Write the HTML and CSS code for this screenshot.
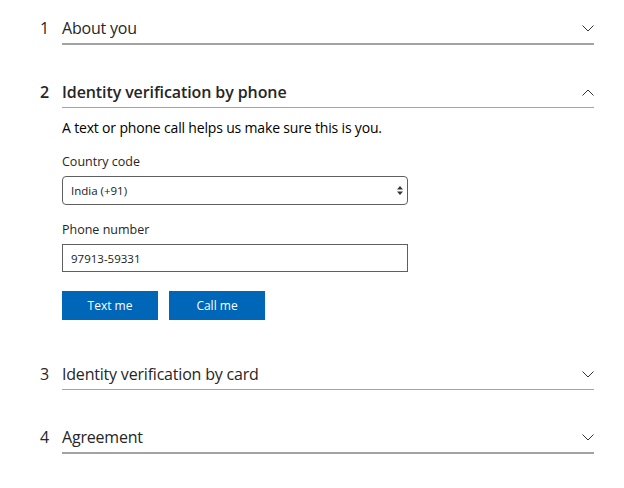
FILE: index.html
```html
<!DOCTYPE html>
<html lang="en">
<head>
<meta charset="utf-8">
<title>Verification</title>
<link rel="stylesheet" href="styles.css">
</head>
<body>
<div class="steps">
  <section class="step">
    <div class="step-header">
      <span class="num">1</span>
      <div class="head thick">
        <span class="title">About you</span>
        <svg class="chev" width="12" height="7" viewBox="0 0 12 7"><path d="M0.5 0.5 L6 6 L11.5 0.5" fill="none" stroke="#333" stroke-width="1"/></svg>
      </div>
    </div>
  </section>

  <section class="step open">
    <div class="step-header">
      <span class="num bold">2</span>
      <div class="head">
        <span class="title bold">Identity verification by phone</span>
        <svg class="chev" width="12" height="7" viewBox="0 0 12 7"><path d="M0.5 6.5 L6 1 L11.5 6.5" fill="none" stroke="#333" stroke-width="1"/></svg>
      </div>
    </div>
    <div class="step-body">
      <p class="intro">A text or phone call helps us make sure this is you.</p>
      <label class="label">Country code</label>
      <div class="select">
        <span>India (+91)</span>
        <svg class="updown" width="6" height="9" viewBox="0 0 6 9"><path d="M3 0 L6 3.5 L0 3.5 Z M0 5.5 L6 5.5 L3 9 Z" fill="#333"/></svg>
      </div>
      <label class="label">Phone number</label>
      <div class="input">97913-59331</div>
      <div class="buttons">
        <button class="btn">Text me</button>
        <button class="btn">Call me</button>
      </div>
    </div>
  </section>

  <section class="step">
    <div class="step-header">
      <span class="num">3</span>
      <div class="head">
        <span class="title">Identity verification by card</span>
        <svg class="chev" width="12" height="7" viewBox="0 0 12 7"><path d="M0.5 0.5 L6 6 L11.5 0.5" fill="none" stroke="#333" stroke-width="1"/></svg>
      </div>
    </div>
  </section>

  <section class="step">
    <div class="step-header">
      <span class="num">4</span>
      <div class="head thick">
        <span class="title">Agreement</span>
        <svg class="chev" width="12" height="7" viewBox="0 0 12 7"><path d="M0.5 0.5 L6 6 L11.5 0.5" fill="none" stroke="#333" stroke-width="1"/></svg>
      </div>
    </div>
  </section>
</div>
</body>
</html>
```

FILE: styles.css
```css
html, body {
  margin: 0;
  padding: 0;
  background: #fff;
}
body {
  font-family: "Open Sans", "Noto Sans", sans-serif;
  color: #262626;
}
.steps {
  display: flex;
  flex-direction: column;
  gap: 38px;
  padding: 19px 30px 0 40px;
  width: 554px;
}
.step-header {
  display: flex;
  align-items: flex-start;
}
.num {
  width: 22px;
  font-size: 16px;
  line-height: 18px;
}
.head {
  flex: 1;
  display: flex;
  justify-content: space-between;
  align-items: center;
  height: 18px;
  padding-bottom: 6px;
  border-bottom: 1px solid #a3a3a3;
}
.head.thick {
  border-bottom-width: 2px;
}
.title {
  font-size: 16px;
  line-height: 18px;
  letter-spacing: -0.2px;
}
.bold {
  font-weight: 600;
  letter-spacing: -0.1px;
}
.chev {
  display: block;
  margin-top: 1px;
}
.step-body {
  padding: 10px 0 7px 22px;
}
.intro {
  margin: 0 0 15px;
  font-size: 14px;
  line-height: 20px;
  letter-spacing: -0.17px;
  color: #000;
}
.label {
  display: block;
  font-size: 12.5px;
  line-height: 18px;
  margin-bottom: 5px;
  color: #262626;
}
.select {
  box-sizing: border-box;
  width: 346px;
  height: 29px;
  border: 1px solid #5f5f5f;
  border-radius: 4px;
  display: flex;
  align-items: center;
  justify-content: space-between;
  padding: 0 4px 0 8px;
  font-size: 11.5px;
  color: #1a1a1a;
  margin-bottom: 16px;
}
.updown {
  display: block;
}
.input {
  box-sizing: border-box;
  width: 346px;
  height: 28px;
  border: 1px solid #5f5f5f;
  display: flex;
  align-items: center;
  padding: 0 8px;
  font-size: 11.5px;
  color: #1a1a1a;
  margin-bottom: 19px;
}
.buttons {
  display: flex;
  gap: 11px;
}
.btn {
  width: 96px;
  height: 29px;
  border: none;
  background: #0067b8;
  color: #fff;
  font-family: "Open Sans", "Noto Sans", sans-serif;
  font-size: 12px;
  font-weight: 500;
  padding: 0;
}
```
